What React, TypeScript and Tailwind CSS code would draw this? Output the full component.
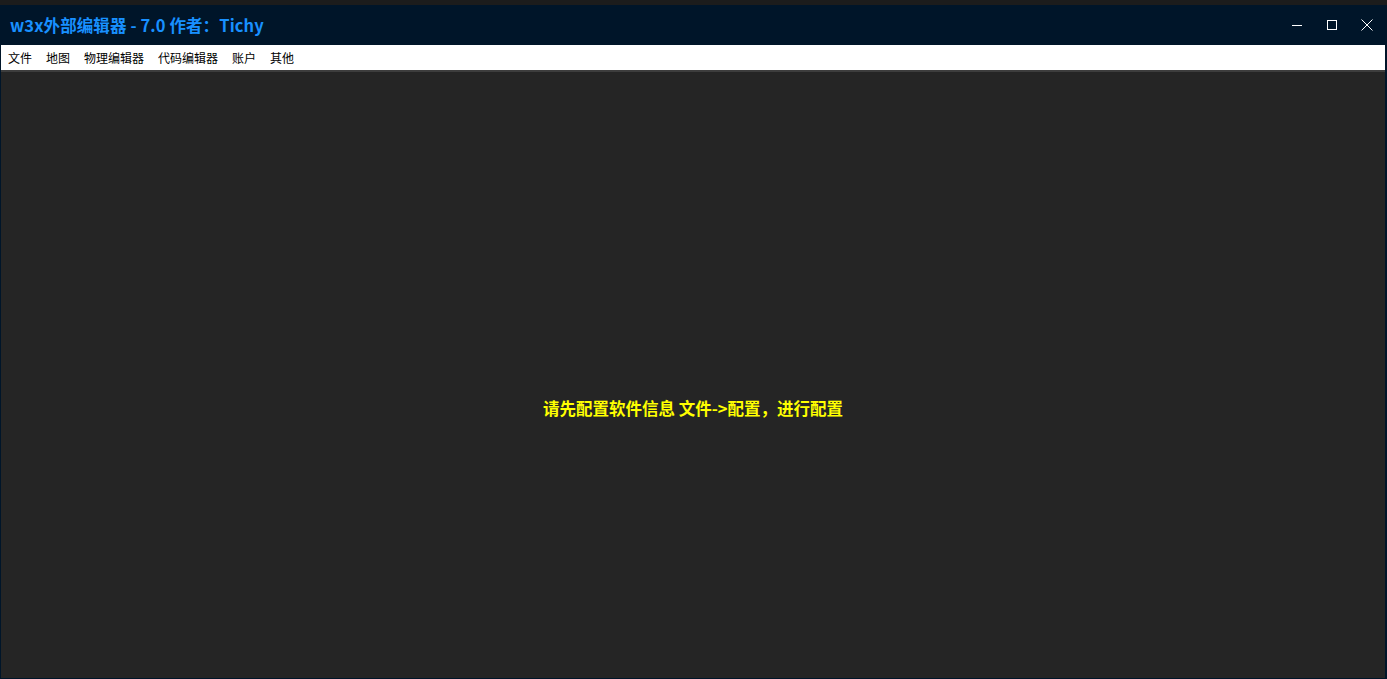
import React from "react"

const menus = ["文件", "地图", "物理编辑器", "代码编辑器", "账户", "其他"]

const font = { fontFamily: '"Microsoft YaHei", "Noto Sans CJK SC", "Liberation Sans", sans-serif' }

export default function App() {
    return (
        <div className="w-[1387px] h-[679px] flex flex-col bg-[#001529] overflow-hidden" style={font}>
            <div className="h-[5px] bg-[#1c1c1c]" />
            <div className="h-[40px] flex items-center justify-between pl-[10px]">
                <span className="text-[#1890ff] text-[16.5px] font-bold leading-none tracking-[0.1px]">w3x外部编辑器 - 7.0 作者：Tichy</span>
                <div className="flex items-center h-full">
                    <button className="w-[35px] h-full flex items-center justify-center text-white">
                        <svg width="12" height="12" viewBox="0 0 12 12"><path d="M1 6.5h10" stroke="currentColor" strokeWidth="1" /></svg>
                    </button>
                    <button className="w-[35px] h-full flex items-center justify-center text-white">
                        <svg width="12" height="12" viewBox="0 0 12 12"><rect x="1.5" y="1.5" width="9" height="9" fill="none" stroke="currentColor" strokeWidth="1" /></svg>
                    </button>
                    <button className="w-[35px] h-full flex items-center justify-center text-white mr-[3px]">
                        <svg width="12" height="12" viewBox="0 0 12 12"><path d="M0.5 0.5l11 11M11.5 0.5l-11 11" stroke="currentColor" strokeWidth="1" /></svg>
                    </button>
                </div>
            </div>
            <div className="flex-1 flex flex-col ml-[1px] mb-[1px] mr-[2px]">
                <div className="h-[27px] bg-white flex items-center gap-[14px] pl-[7px] border-b-2 border-[#3d3d3d]">
                    {menus.map((m, i) => (
                        <span key={i} className="text-[12px] text-black leading-none">{m}</span>
                    ))}
                </div>
                <div className="flex-1 bg-[#252525] flex items-center justify-center pt-[66px]">
                    <span className="text-[#ffff00] text-[16.5px] font-bold">请先配置软件信息 文件-&gt;配置，进行配置</span>
                </div>
            </div>
        </div>
    )
}
